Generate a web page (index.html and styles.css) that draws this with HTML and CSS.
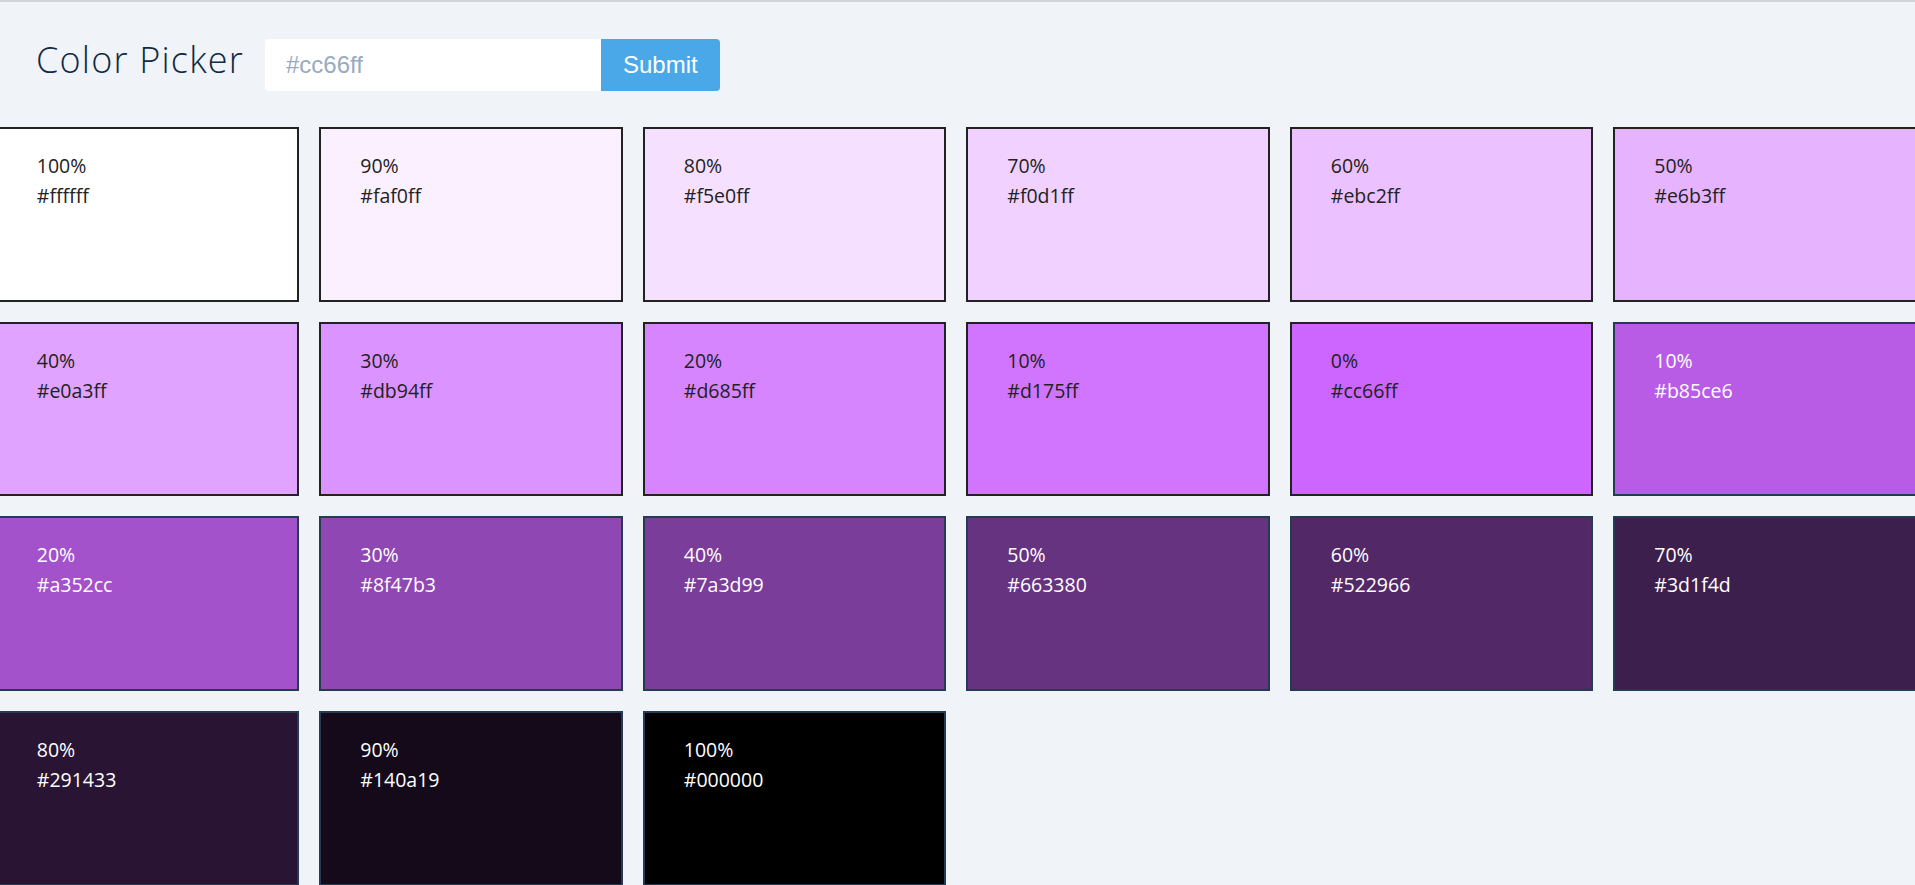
FILE: index.html
```html
<!DOCTYPE html>
<html lang="en">
<head>
<meta charset="utf-8">
<title>Color Picker</title>
<link rel="stylesheet" href="styles.css">
</head>
<body>
<header class="top">
  <h1 class="title">Color Picker</h1>
  <form class="picker">
    <input class="picker-input" type="text" placeholder="#cc66ff">
    <button class="picker-btn" type="button">Submit</button>
  </form>
</header>
<main class="swatches">
  <div class="swatch tint" style="background:#ffffff"><span>100%</span><span>#ffffff</span></div>
  <div class="swatch tint" style="background:#faf0ff"><span>90%</span><span>#faf0ff</span></div>
  <div class="swatch tint" style="background:#f5e0ff"><span>80%</span><span>#f5e0ff</span></div>
  <div class="swatch tint" style="background:#f0d1ff"><span>70%</span><span>#f0d1ff</span></div>
  <div class="swatch tint" style="background:#ebc2ff"><span>60%</span><span>#ebc2ff</span></div>
  <div class="swatch tint" style="background:#e6b3ff"><span>50%</span><span>#e6b3ff</span></div>
  <div class="swatch tint" style="background:#e0a3ff"><span>40%</span><span>#e0a3ff</span></div>
  <div class="swatch tint" style="background:#db94ff"><span>30%</span><span>#db94ff</span></div>
  <div class="swatch tint" style="background:#d685ff"><span>20%</span><span>#d685ff</span></div>
  <div class="swatch tint" style="background:#d175ff"><span>10%</span><span>#d175ff</span></div>
  <div class="swatch tint" style="background:#cc66ff"><span>0%</span><span>#cc66ff</span></div>
  <div class="swatch shade" style="background:#b85ce6"><span>10%</span><span>#b85ce6</span></div>
  <div class="swatch shade" style="background:#a352cc"><span>20%</span><span>#a352cc</span></div>
  <div class="swatch shade" style="background:#8f47b3"><span>30%</span><span>#8f47b3</span></div>
  <div class="swatch shade" style="background:#7a3d99"><span>40%</span><span>#7a3d99</span></div>
  <div class="swatch shade" style="background:#663380"><span>50%</span><span>#663380</span></div>
  <div class="swatch shade" style="background:#522966"><span>60%</span><span>#522966</span></div>
  <div class="swatch shade" style="background:#3d1f4d"><span>70%</span><span>#3d1f4d</span></div>
  <div class="swatch shade" style="background:#291433"><span>80%</span><span>#291433</span></div>
  <div class="swatch shade" style="background:#140a19"><span>90%</span><span>#140a19</span></div>
  <div class="swatch shade" style="background:#000000"><span>100%</span><span>#000000</span></div>
</main>
</body>
</html>
```
FILE: styles.css
```css
html {
  overflow: hidden;
}
body {
  margin: 0;
  background: #f0f4f8;
  border-top: 2px solid #d1d5da;
  font-family: "Open Sans", "Noto Sans", sans-serif;
  color: #102a43;
}
.top {
  display: flex;
  align-items: baseline;
  padding: 37px 0 0 36px;
  height: 52px;
}
.title {
  margin: 0;
  font-size: 36px;
  line-height: 36px;
  font-weight: 300;
  letter-spacing: 1.2px;
  color: #102a43;
}
.picker {
  display: flex;
  align-items: baseline;
  margin-left: 21px;
}
.picker-input {
  box-sizing: border-box;
  width: 336px;
  height: 52px;
  border: 0;
  border-radius: 4px 0 0 4px;
  padding: 0 21px;
  background: #fff;
  font-family: "Liberation Sans", Arial, sans-serif;
  font-size: 24px;
  color: #102a43;
  outline: none;
}
.picker-input::placeholder {
  color: #9aaabf;
}
.picker-btn {
  box-sizing: border-box;
  height: 52px;
  border: 0;
  border-radius: 0 4px 4px 0;
  padding: 0 22px;
  background: #4aa7e8;
  color: #fff;
  font-family: "Liberation Sans", Arial, sans-serif;
  font-size: 24px;
}
.swatches {
  display: grid;
  grid-template-columns: repeat(6, 303.5px);
  grid-auto-rows: 174.7px;
  gap: 20px;
  margin: 36px 0 0 -4.2px;
}
.swatch {
  box-sizing: border-box;
  display: flex;
  flex-direction: column;
  padding: 22px 39px;
  border: 2px solid #222;
  font-size: 19.5px;
  line-height: 30px;
}
.tint {
  color: #222;
  border-color: #222;
}
.shade {
  color: #fff;
  border-color: #243b53;
}
```
